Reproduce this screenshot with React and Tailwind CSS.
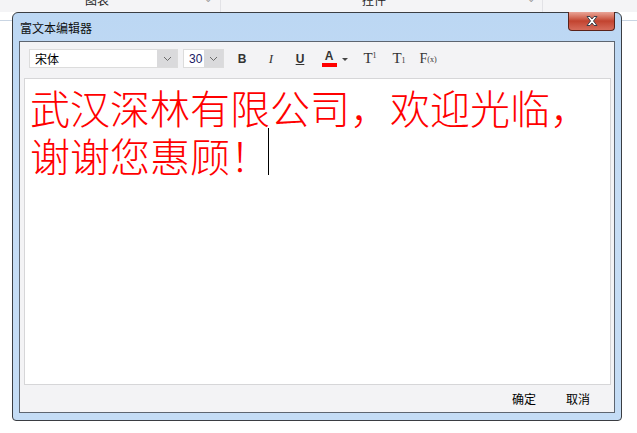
import React from "react";

const ui = { fontFamily: '"Noto Sans CJK SC", "Microsoft YaHei", sans-serif' };
const serif = { fontFamily: '"Liberation Serif", "DejaVu Serif", serif' };

const ToolButton = ({ children, className = "" }) => (
	<div className={`w-[24px] h-[19px] flex items-center justify-center text-[#333] ${className}`}>
		{children}
	</div>
);

const Chevron = () => (
	<svg width="9" height="6" viewBox="0 0 9 6" fill="none">
		<path d="M1 1l3.5 3.5L8 1" stroke="#6a6a6a" strokeWidth="1" />
	</svg>
);

const App = () => {
	return (
		<div className="relative w-[637px] h-[433px] bg-white overflow-hidden" style={ui}>
			{/* background behind the dialog */}
			<div className="h-[12px] bg-[#f4f4f6] flex text-[12px] text-[#222] overflow-hidden">
				<div className="relative w-[221px] border-r border-[#e2e2e6]">
					<span className="absolute left-[85px] -top-[9px]">图表</span>
					<span className="absolute left-[204px] -top-[10px] text-[#999] text-[10px]">⌄</span>
				</div>
				<div className="relative w-[322px] border-r border-[#e2e2e6]">
					<span className="absolute left-[141px] -top-[9px]">控件</span>
					<span className="absolute left-[306px] -top-[10px] text-[#999] text-[10px]">⌄</span>
				</div>
			</div>
			<div className="mt-[8px] h-px bg-[#c9d5e3]" />

			{/* dialog window */}
			<div className="absolute left-[12px] top-[12px] w-[610px] h-[409px] rounded-t-[6px] rounded-b-[4px] border border-[#3a3d42] bg-gradient-to-b from-[#bcd7f3] via-[#c6ddf5] to-[#c4dcf5] px-[6px] pb-[7px] flex flex-col">
				{/* title bar */}
				<div className="relative h-[28px] flex items-center">
					<span className="text-[12px] text-[#101010] pl-[1px] pt-[1px]">富文本编辑器</span>
					<div className="absolute -top-[1px] right-[0px] w-[47px] h-[19px] rounded-b-[4px] border border-[#5a2219] border-t-0 bg-gradient-to-b from-[#e9a497] via-[#c2432f] to-[#d66c5b] flex items-center justify-center">
						<svg width="16" height="12" viewBox="0 0 16 12">
							<path
								d="M3 1.5h3l2 2.5 2-2.5h3l-3.5 4.5 3.5 4.5h-3l-2-2.5-2 2.5H3l3.5-4.5z"
								fill="#ffffff"
								stroke="#3b3f4a"
								strokeWidth="1"
								strokeLinejoin="round"
							/>
						</svg>
					</div>
				</div>

				{/* inner frame */}
				<div className="flex-1 border border-[#5d6570] bg-[#f3f3f5] flex flex-col">
					{/* toolbar */}
					<div className="flex items-center pl-[9px] pt-[7px]">
						<div className="w-[149px] h-[19px] flex border border-[#dcdcdc] bg-white">
							<div className="flex-1 flex items-center pl-[5px] text-[12px] text-black">宋体</div>
							<div className="w-[20px] bg-[#dadadc] flex items-center justify-center">
								<Chevron />
							</div>
						</div>
						<div className="ml-[5px] w-[41px] h-[19px] flex border border-[#dcdcdc] bg-white">
							<div className="flex-1 flex items-center pl-[5px] text-[12px] text-[#1a1a66]" style={{ fontFamily: '"Liberation Sans", sans-serif' }}>30</div>
							<div className="w-[19px] bg-[#dadadc] flex items-center justify-center">
								<Chevron />
							</div>
						</div>
						<div className="ml-[6px] flex items-center gap-[5px]">
							<ToolButton>
								<span className="text-[12px] font-bold" style={{ fontFamily: '"Liberation Sans", sans-serif' }}>B</span>
							</ToolButton>
							<ToolButton>
								<span className="text-[13px] italic" style={serif}>I</span>
							</ToolButton>
							<ToolButton>
								<span className="text-[12px] font-bold underline" style={{ fontFamily: '"Liberation Sans", sans-serif' }}>U</span>
							</ToolButton>
							<div className="w-[36px] h-[19px] flex items-center">
								<div className="w-[24px] flex flex-col items-center">
									<span className="text-[12px] font-bold leading-[11px] text-[#333]" style={{ fontFamily: '"Liberation Sans", sans-serif' }}>A</span>
									<div className="mt-[1px] w-[15px] h-[4px] bg-[#ff0000]" />
								</div>
								<svg width="6" height="4" viewBox="0 0 6 4" className="ml-[1px] mt-[3px]">
									<path d="M0 0h6L3 3z" fill="#444" />
								</svg>
							</div>
							<ToolButton>
								<span className="text-[15px] leading-none" style={serif}>T</span>
								<span className="text-[8px] leading-none self-start mt-[3px]" style={serif}>1</span>
							</ToolButton>
							<ToolButton>
								<span className="text-[15px] leading-none" style={serif}>T</span>
								<span className="text-[8px] leading-none self-end mb-[3px]" style={serif}>1</span>
							</ToolButton>
							<ToolButton>
								<span className="text-[14px] leading-none" style={serif}>F</span>
								<span className="text-[8px] leading-none mt-[2px]" style={serif}>(x)</span>
							</ToolButton>
						</div>
					</div>

					{/* editor area */}
					<div className="mt-[10px] ml-[4px] mr-[3px] h-[307px] border border-[#d6d6d8] bg-white pl-[5px] pt-[4px]">
						<p
							className="text-[40px] leading-[48px] text-[#ff0000] font-light"
							style={{ fontFamily: '"Noto Sans CJK SC", sans-serif' }}
						>
							武汉深林有限公司，欢迎光临，
							<br />
							谢谢您惠顾！
							<span className="relative -top-[10px] inline-block w-px h-[47px] bg-black align-middle -ml-[2px]" />
						</p>
					</div>

					{/* footer buttons */}
					<div className="flex-1 flex items-center justify-end pr-[24px] gap-[30px] text-[12px] text-black">
						<button className="leading-none">确定</button>
						<button className="leading-none">取消</button>
					</div>
				</div>
			</div>
		</div>
	);
};

export default App;
